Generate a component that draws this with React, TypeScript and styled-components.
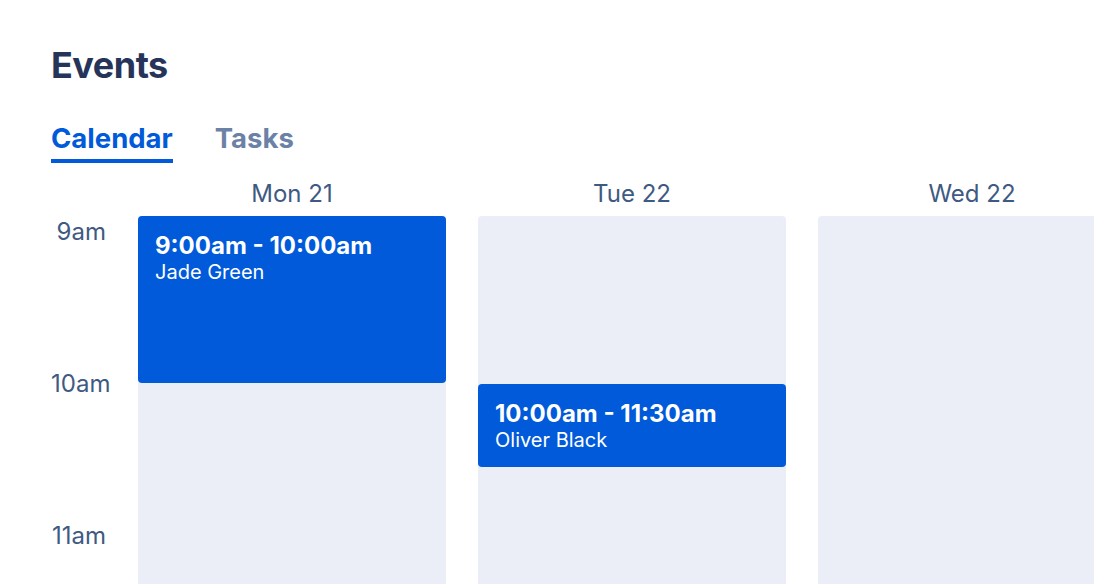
import React from "react";
import styled, { createGlobalStyle } from "styled-components";

const Global = createGlobalStyle`
  html, body { margin: 0; padding: 0; background: #ffffff; }
  body { font-family: Inter, "Noto Sans", sans-serif; -webkit-font-smoothing: antialiased; }
  * { box-sizing: border-box; }
`;

const Page = styled.div`
  width: 1094px;
  height: 584px;
  overflow: hidden;
  padding: 40px 0 0 51px;
`;

const Title = styled.h1`
  margin: 0;
  font-size: 36px;
  line-height: 50px;
  font-weight: 700;
  color: #26345a;
  letter-spacing: -0.5px;
`;

const TabBar = styled.div`
  display: flex;
  gap: 42px;
  margin-top: 31px;
`;

const Tab = styled.div<{ $active?: boolean }>`
  font-size: 27.5px;
  line-height: 34px;
  font-weight: 700;
  color: ${(p) => (p.$active ? "#005ad9" : "#6c81a6")};
  padding-bottom: 4px;
  border-bottom: 4px solid ${(p) => (p.$active ? "#005ad9" : "transparent")};
`;

const Grid = styled.div`
  display: grid;
  grid-template-columns: 55px repeat(3, 308px);
  column-gap: 32px;
  margin-top: 11px;
`;

const DayHeader = styled.div`
  text-align: center;
  font-size: 24px;
  line-height: 40px;
  color: #3f5a82;
  height: 42px;
`;

const TimeLabels = styled.div`
  display: flex;
  flex-direction: column;
  padding-top: 42px;
`;

const TimeLabel = styled.div`
  height: 152px;
  text-align: right;
  font-size: 24px;
  line-height: 32px;
  color: #3f5a82;
`;

const Column = styled.div`
  display: flex;
  flex-direction: column;
`;

const Track = styled.div`
  position: relative;
  height: 400px;
  background: #ebeef7;
  border-radius: 4px 4px 0 0;
`;

const Event = styled.div`
  position: absolute;
  left: 0;
  right: 0;
  background: #005ad9;
  border-radius: 4px;
  padding: 16px 17px;
  color: #ffffff;
`;

const EventTime = styled.div`
  font-size: 24px;
  line-height: 28px;
  font-weight: 700;
`;

const EventName = styled.div`
  font-size: 20px;
  line-height: 24px;
  font-weight: 400;
`;

type Ev = { top: number; height: number; time: string; name: string };

const days: { label: string; events: Ev[] }[] = [
  { label: "Mon 21", events: [{ top: 0, height: 167, time: "9:00am - 10:00am", name: "Jade Green" }] },
  { label: "Tue 22", events: [{ top: 168, height: 83, time: "10:00am - 11:30am", name: "Oliver Black" }] },
  { label: "Wed 22", events: [] },
];

export default function App() {
  return (
    <>
      <Global />
      <Page>
        <Title>Events</Title>
        <TabBar>
          <Tab $active>Calendar</Tab>
          <Tab>Tasks</Tab>
        </TabBar>
        <Grid>
          <TimeLabels>
            <TimeLabel>9am</TimeLabel>
            <TimeLabel>10am</TimeLabel>
            <TimeLabel>11am</TimeLabel>
          </TimeLabels>
          {days.map((d) => (
            <Column key={d.label}>
              <DayHeader>{d.label}</DayHeader>
              <Track>
                {d.events.map((e) => (
                  <Event key={e.time} style={{ top: e.top, height: e.height }}>
                    <EventTime>{e.time}</EventTime>
                    <EventName>{e.name}</EventName>
                  </Event>
                ))}
              </Track>
            </Column>
          ))}
        </Grid>
      </Page>
    </>
  );
}
